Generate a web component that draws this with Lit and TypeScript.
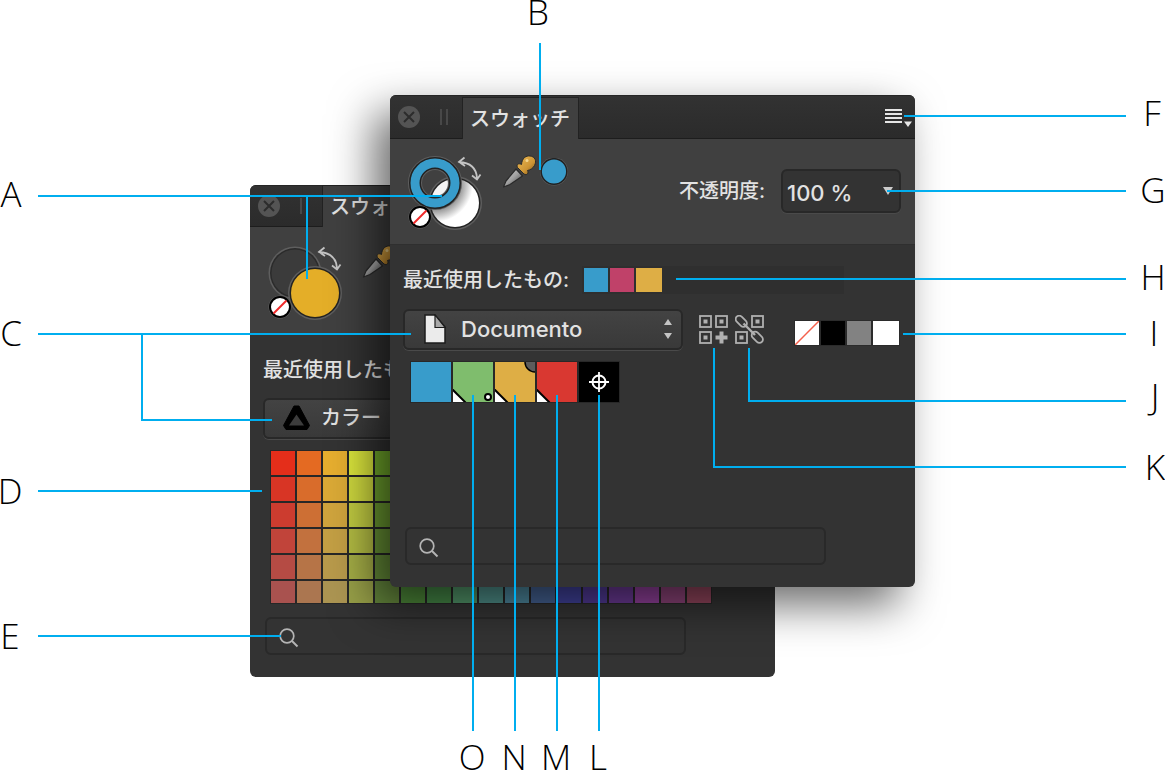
import { LitElement, html, svg, css } from "lit";
import { customElement, property } from "lit/decorators.js";
import { styleMap } from "lit/directives/style-map.js";

const TOP_ROW = [
  "#e42e1a", "#e46a22", "#e6ae2f", "#dbe63c", "#74ad2c", "#4c9a2e", "#3a9a3a", "#3aa070", "#38a09a",
  "#3890b8", "#3668b8", "#3438b8", "#5030b0", "#7030b0", "#a034b0", "#b03488", "#b83458",
];
const BOTTOM_ROW = [
  "#a9524f", "#ab7650", "#ac9552", "#98a048", "#64863c", "#4e8a3a", "#468a48", "#54996c", "#50928c",
  "#4f8aa0", "#466496", "#42439e", "#523b98", "#6d3b98", "#94429e", "#8e447a", "#94465e",
];
const ROWS = 6;

const channels = (hex: string) => [1, 3, 5].map((i) => parseInt(hex.slice(i, i + 2), 16));
const blend = (a: string, b: string, t: number) => {
  const from = channels(a);
  const to = channels(b);
  return `rgb(${from.map((v, i) => Math.round(v + (to[i] - v) * t)).join(",")})`;
};
const COLOR_CELLS = Array.from({ length: ROWS }, (_, row) =>
  TOP_ROW.map((top, col) => blend(top, BOTTOM_ROW[col], row / (ROWS - 1)))
).flat();

const RECENT = [
  { name: "ブルー", color: "#389ccb" },
  { name: "ピンク", color: "#c04169" },
  { name: "イエロー", color: "#deae45" },
];

const dropper = html`<svg width="36" height="36" viewBox="0 0 36 36" aria-hidden="true">
  <defs>
    <linearGradient id="glass" x1="0" y1="0" x2="1" y2="1">
      <stop offset="0.2" stop-color="#c0c0c0" />
      <stop offset="0.5" stop-color="#a0a0a0" />
      <stop offset="0.8" stop-color="#5c5c5c" />
    </linearGradient>
    <linearGradient id="bulb" x1="0" y1="0" x2="1" y2="1">
      <stop offset="0.1" stop-color="#e8b550" />
      <stop offset="0.6" stop-color="#cd9434" />
      <stop offset="1" stop-color="#6f4c15" />
    </linearGradient>
  </defs>
  <path d="M14 15 4 27 1.500 33 8 30.500 20.500 22Z" fill="url(#glass)" stroke="#2a2a2a" stroke-width="1.200" stroke-linejoin="round" />
  <path d="M15.500 13.500C14 10 17 9 19.500 10.500 20 4 24 1.500 28 2 33 2.500 35 7 32.500 11.500 31 14.500 28 16 25.500 16.500 27 19 25 22 22 20Z" fill="url(#bulb)" stroke="#2a2a2a" />
  <circle cx="25" cy="6.500" r="1.500" fill="#f3d690" />
</svg>`;

const wells = (ring: boolean) => html`<svg width="80" height="80" viewBox="0 0 80 80" aria-hidden="true">
  <defs>
    <radialGradient id="shade" gradientUnits="userSpaceOnUse" cx="30" cy="31" r="40">
      <stop offset="0.3" stop-color="#f4f4f4" />
      <stop offset="0.38" stop-color="#bbb" />
      <stop offset="0.6" stop-color="#888" />
      <stop offset="0.95" stop-color="#fff" />
    </radialGradient>
  </defs>
  ${ring
    ? svg`<circle cx="50" cy="50" r="27" fill="#5e5e5e" />
        <circle cx="50" cy="50" r="25.500" fill="#222" />
        <circle cx="50" cy="50" r="24" fill="url(#shade)" />
        <circle cx="30" cy="30" r="20" fill="none" stroke="#5e5e5e" stroke-width="14" />
        <circle cx="30" cy="30" r="20" fill="none" stroke="#222" stroke-width="12" />
        <circle cx="30" cy="30" r="20" fill="none" stroke="#389ccb" stroke-width="9" />`
    : svg`<circle cx="30" cy="30" r="26.500" fill="#5e5e5e" />
        <circle cx="30" cy="30" r="25" fill="#2b2b2b" />
        <circle cx="30" cy="30" r="23.500" fill="#3b3b3b" />
        <circle cx="50" cy="50" r="27" fill="#5e5e5e" />
        <circle cx="50" cy="50" r="25.500" fill="#222" />
        <circle cx="50" cy="50" r="24" fill="#e4ae28" />`}
  <circle cx="15" cy="64" r="11.500" fill="#5e5e5e" />
  <circle cx="15" cy="64" r="10" fill="#fff" stroke="#000" stroke-width="2" />
  <path d="M8.500 70.500 21.500 57.500" stroke="#f02a2a" stroke-width="2" />
  <path d="M54 9Q71 10 72 25M59.500 4.500 54 9 60 13M67 22.500 72 26.500 75.500 21.500" fill="none" stroke="#c4c4c4" stroke-width="1.800" />
</svg>`;

const magnifier = html`<svg width="20" height="20" viewBox="0 0 20 20" aria-hidden="true">
  <circle cx="8" cy="8" r="6.800" fill="none" stroke="#b4b4b4" stroke-width="1.700" />
  <path d="M13 13 18.500 18.500" stroke="#b4b4b4" stroke-width="2" />
</svg>`;

const tile = (x: number, y: number) => svg`
  <rect x=${x + 1} y=${y + 1} width="11" height="11" fill="none" stroke="#b0b0b0" stroke-width="1.800" />
  <rect x=${x + 4.5} y=${y + 4.5} width="4" height="4" fill="#b0b0b0" />`;

@customElement("swatch-panel")
class SwatchPanel extends LitElement {
  @property({ reflect: true }) kind: "document" | "color" = "document";

  static styles = css`
    * { box-sizing: border-box; }
    :host {
      display: flex;
      flex-direction: column;
      height: 492px;
      border-radius: 6px;
      overflow: hidden;
      isolation: isolate;
      background: #333;
      color: #e2e2e2;
      font: 500 20px/28px "Inter", "Noto Sans CJK JP", sans-serif;
      --title-height: 44px;
      --tools-height: 106px;
      --tools-top: 14px;
      --row-gap: 15px;
    }
    :host([kind="color"]) {
      --title-height: 42px;
      --tools-height: 108px;
      --tools-top: 16px;
      --row-gap: 14px;
    }
    svg { display: block; }
    button { padding: 0; border: 0; background: none; color: inherit; font: inherit; }
    .titlebar {
      display: flex;
      height: var(--title-height);
      flex: none;
      padding: 0 3px 0 8px;
      background: linear-gradient(#323232, #2b2b2b);
      border-top: 1px solid #262626;
      border-bottom: 1px solid #1d1d1d;
      align-items: center;
    }
    .grip { width: 8px; height: 16px; margin: 0 15px 0 20px; border: solid #484848; border-width: 0 2px; }
    .tab {
      align-self: flex-end;
      height: 41px;
      margin-bottom: -1px;
      padding: 0 8px 0 7px;
      background: #404040;
      box-shadow: 0 0 0 1px #222;
      clip-path: inset(-1px -1px 0 -1px);
    }
    .menu { margin-left: auto; }
    .tools {
      display: flex;
      flex: none;
      height: var(--tools-height);
      padding: var(--tools-top) 14px 0 15px;
      background: #404040;
      border-bottom: 1px solid #2f2f2f;
      align-items: flex-start;
    }
    .dropper { margin: 1px 2px 0 17px; }
    .picked { margin-top: 5px; }
    .opacity { display: flex; margin: 16px 0 0 auto; align-items: center; gap: 16px; }
    .pick { display: grid; align-items: center; }
    .pick > * { grid-area: 1 / 1; }
    .pick svg { pointer-events: none; z-index: 1; }
    select {
      appearance: none;
      height: 41px;
      margin: 0;
      border: 2px solid #282828;
      border-radius: 6px;
      background: linear-gradient(#434343, #393939);
      box-shadow: 0 1px 0 #4a4a4a;
      color: #e2e2e2;
      font: 500 22px/28px "Inter", "Noto Sans CJK JP", sans-serif;
    }
    .amount select { width: 120px; height: 44px; padding: 4px 4px 0; background: #333; }
    .amount svg { justify-self: end; margin-right: 7px; }
    .library select { width: 280px; padding: 0 0 0 56px; }
    :host([kind="color"]) .library select { font-size: 20px; }
    .glyph { margin-left: 20px; }
    .steps { justify-self: end; margin-right: 11px; }
    .body { display: flex; flex: 1; flex-direction: column; padding: 21px 15px 22px 13px; }
    .recent { display: flex; }
    .label { flex: none; width: 179px; white-space: nowrap; }
    .strip { display: flex; flex: 0 1 262px; gap: 2px; padding: 2px; background: #2f2f2f; }
    .chip { width: 24px; height: 24px; }
    .chip:last-child { width: 26px; }
    .row { display: flex; height: 40px; margin-top: var(--row-gap); align-items: center; }
    .actions { display: flex; gap: 7px; margin-left: 16px; }
    .basics { display: flex; gap: 2px; margin: 8px 0 0 auto; padding: 1px; background: #2b2b2b; }
    .none { background: #fff; }
    .black { background: #000; }
    .grey { background: #828282; }
    .white { background: #fff; }
    .swatches { display: flex; gap: 2px; margin: 12px 0 0 7px; padding: 1px; background: #282828; align-self: flex-start; }
    .colors {
      display: grid;
      grid-template: repeat(5, 24px) 22px / repeat(17, 24px);
      gap: 2px;
      margin: 12px 0 0 7px;
      padding: 1px;
      background: #272727;
      align-self: flex-start;
    }
    .search {
      display: flex;
      width: 421px;
      height: 38px;
      margin: auto 0 0 2px;
      padding: 3px 12px 0;
      gap: 10px;
      border: 2px solid #292929;
      border-radius: 6px;
      align-items: center;
    }
    input { flex: 1; min-width: 0; border: 0; outline: 0; background: none; color: inherit; font: inherit; }
  `;

  private chips() {
    return RECENT.map(
      (c) => html`<button class="chip" aria-label=${c.name} style=${styleMap({ background: c.color })}></button>`
    );
  }

  private documentSwatches() {
    const corner = svg`<path d="M0 27.500 13 41H0Z" fill="#fff" /><path d="M-1 27 13 41" stroke="#000" stroke-width="2" />`;
    return html`<div class="swatches">
      <button aria-label="ブルー"><svg width="40" height="40"><rect width="40" height="40" fill="#389ccb" /></svg></button>
      <button aria-label="グリーン"><svg width="40" height="40">
        <rect width="40" height="40" fill="#7fbd6d" />${corner}
        <circle cx="35" cy="35" r="3" fill="#fff" stroke="#000" stroke-width="2" />
      </svg></button>
      <button aria-label="イエロー"><svg width="40" height="40">
        <rect width="40" height="40" fill="#deae45" />${corner}
        <circle cx="40" cy="0" r="10" fill="#5c5c5c" stroke="#000" stroke-width="1.500" />
      </svg></button>
      <button aria-label="レッド"><svg width="40" height="40"><rect width="40" height="40" fill="#d93831" />${corner}</svg></button>
      <button aria-label="レジストレーション"><svg width="40" height="40">
        <rect width="40" height="40" fill="#000" />
        <circle cx="20" cy="20" r="6.500" fill="none" stroke="#fff" stroke-width="2" />
        <path d="M20 10V30M10 20H30" stroke="#fff" stroke-width="1.800" />
      </svg></button>
    </div>`;
  }

  render() {
    const doc = this.kind === "document";
    return html`
      <div class="titlebar">
        <button aria-label="閉じる"><svg width="22" height="22" viewBox="0 0 22 22">
          <circle cx="11" cy="11" r="11" fill="#545454" />
          <path d="M6 6 16 16M16 6 6 16" stroke="#2c2c2c" stroke-width="2" />
        </svg></button>
        <span class="grip"></span>
        <button class="tab">スウォッチ</button>
        <button class="menu" aria-label="メニュー"><svg width="28" height="22" viewBox="0 0 28 22">
          <path d="M1 4H18M1 8H18M1 12H18M1 16H18" stroke="#e6e6e6" stroke-width="2" />
          <path d="M20 15.500H28L24 21Z" fill="#e6e6e6" />
        </svg></button>
      </div>
      <div class="tools">
        <button aria-label="線と塗りつぶし">${wells(doc)}</button>
        <button class="dropper" aria-label="カラーピッカー">${dropper}</button>
        <button class="picked" aria-label="選択したカラー"><svg width="28" height="28" viewBox="0 0 28 28">
          <circle cx="14" cy="13.500" r="14" fill="#5e5e5e" />
          <circle cx="14" cy="13.500" r="12.800" fill="#389ccb" stroke="#222" stroke-width="1.500" />
        </svg></button>
        <div class="opacity">
          <label for="amount">不透明度:</label>
          <span class="pick amount">
            <select id="amount"><option>100 %</option></select>
            <svg width="12" height="8"><path d="M1 0H11L6 8Z" fill="#ccc" /></svg>
          </span>
        </div>
      </div>
      <div class="body">
        <div class="recent">
          <span class="label">最近使用したもの:</span>
          <div class="strip">${this.chips()}</div>
        </div>
        <div class="row">
          <span class="pick library">
            <select aria-label="パレット"><option>${doc ? "Documento" : "カラー"}</option></select>
            ${doc
              ? html`<svg class="glyph" width="24" height="30" viewBox="0 0 24 30">
                  <path d="M2 1H12L22 13V29H2Z" fill="#ebebeb" stroke="#1c1c1c" stroke-width="1.500" />
                  <path d="M12 1V13.500H22Z" fill="#a8a8a8" stroke="#1c1c1c" stroke-width="1.200" />
                </svg>`
              : html`<svg class="glyph" width="28" height="26" viewBox="0 0 28 26">
                  <path d="M11 1H16L26.500 20.500 24 24.500H3L0.500 20.500Z" fill="#000" stroke="#000" stroke-linejoin="round" />
                  <path d="M13.500 9.500 21 20.500H6Z" fill="#3c3c3c" />
                </svg>`}
            <svg class="steps" width="8" height="20"><path d="M0 6 4 0 8 6ZM0 14H8L4 20Z" fill="#c4c4c4" /></svg>
          </span>
          ${doc
            ? html`<div class="actions">
                  <button aria-label="スウォッチを追加"><svg width="29" height="29" viewBox="0 0 29 29">
                    ${tile(0, 0)}${tile(16, 0)}${tile(0, 16)}
                    <path d="M22.500 16.500V28.500M16.500 22.500H28.500" stroke="#b0b0b0" stroke-width="4" />
                  </svg></button>
                  <button aria-label="グローバルカラーを追加"><svg width="29" height="29" viewBox="0 0 29 29">
                    ${tile(16, 0)}${tile(0, 16)}
                    <g fill="none" stroke="#b0b0b0" stroke-width="1.800">
                      <rect x="-6.500" y="-3.500" width="13" height="7" rx="3.500" transform="translate(6.300 6.300) rotate(45)" />
                      <rect x="-6.500" y="-3.500" width="13" height="7" rx="3.500" transform="translate(22.300 22.300) rotate(45)" />
                      <path d="M8.500 8.500 20 20" stroke-width="2.400" />
                    </g>
                  </svg></button>
                </div>
                <div class="basics">
                  <button class="chip none" aria-label="なし"><svg width="24" height="24"><path d="M0 24 24 0" stroke="#f4604c" stroke-width="1.500" /></svg></button>
                  <button class="chip black" aria-label="黒"></button>
                  <button class="chip grey" aria-label="グレー"></button>
                  <button class="chip white" aria-label="白"></button>
                </div>`
            : null}
        </div>
        ${doc
          ? this.documentSwatches()
          : html`<div class="colors">
              ${COLOR_CELLS.map((c) => html`<button aria-label=${c} style=${styleMap({ background: c })}></button>`)}
            </div>`}
        <label class="search">${magnifier}<input type="search" aria-label="検索" /></label>
      </div>
    `;
  }
}

const LEADERS = [
  "M38 196H442M307 196V279",
  "M540 43V170",
  "M38 334H411M142 334V420H272",
  "M38 491H262",
  "M38 636H281",
  "M904 116H1126",
  "M887 191H1126",
  "M676 279H1126",
  "M903 334H1126",
  "M749 348V401H1126",
  "M714 348V467H1126",
  "M599 395V731",
  "M557 395V731",
  "M515 395V731",
  "M473 395V731",
];

const LETTERS: [string, number, number][] = [
  ["A", 11, 207], ["B", 538, 25], ["C", 11, 346], ["D", 10, 504], ["E", 10, 649],
  ["F", 1152, 126], ["G", 1153, 203], ["H", 1153, 290], ["I", 1154, 346], ["J", 1155, 409],
  ["K", 1155, 480], ["L", 598, 770], ["M", 556, 770], ["N", 514, 770], ["O", 472, 770],
];

@customElement("app-root")
class AppRoot extends LitElement {
  static styles = css`
    :host { display: block; background: #fff; }
    .stage { position: relative; min-height: 770px; overflow: hidden; }
    swatch-panel { position: absolute; width: 525px; }
    .back { left: 250px; top: 185px; }
    .front { left: 390px; top: 95px; box-shadow: -16px 18px 44px rgba(0, 0, 0, 0.58); }
    .callouts { position: absolute; inset: 0; width: 100%; height: 100%; pointer-events: none; }
    .leader { fill: none; stroke: #00aeef; stroke-width: 2px; }
    .letter { fill: #000; font: 300 35px "Open Sans", sans-serif; text-anchor: middle; }
  `;

  render() {
    return html`<main class="stage">
      <swatch-panel class="back" kind="color"></swatch-panel>
      <swatch-panel class="front" kind="document"></swatch-panel>
      <svg class="callouts">
        ${LEADERS.map((d) => svg`<path class="leader" d=${d} />`)}
        ${LETTERS.map(([t, x, y]) => svg`<text class="letter" x=${x} y=${y}>${t}</text>`)}
      </svg>
    </main>`;
  }
}
